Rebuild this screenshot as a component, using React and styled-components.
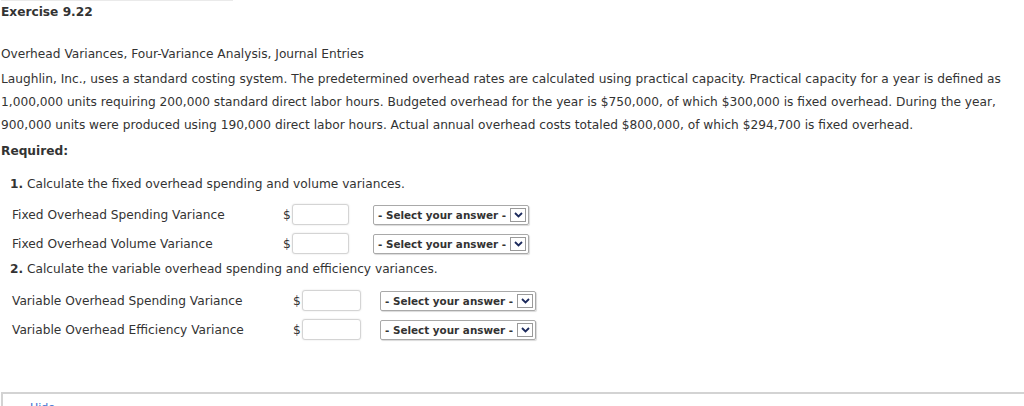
import React from "react";
import styled, { createGlobalStyle } from "styled-components";

const GlobalStyle = createGlobalStyle`
  body {
    margin: 0;
    background: #fff;
    font-family: "DejaVu Sans", Verdana, sans-serif;
    font-size: 12.2px;
    color: #333;
  }
`;

const Page = styled.div`
  width: 1024px;
  height: 406px;
  overflow: hidden;
  padding-left: 1px;
  box-sizing: border-box;
`;

const Header = styled.div`
  width: 232px;
  border-top: 1px solid #eaeaea;
  padding-top: 3px;
`;

const Title = styled.div`
  font-weight: bold;
  line-height: 16px;
`;

const Subtitle = styled.div`
  margin-top: 23px;
  margin-bottom: 2px;
  line-height: 23px;
`;

const Para = styled.p`
  margin: 0;
  line-height: 23px;
  white-space: nowrap;
`;

const Required = styled.div`
  margin-top: 3px;
  font-weight: bold;
  line-height: 23px;
`;

const Section = styled.div`
  padding-left: 9px;
  margin-top: ${(p) => p.$top}px;
`;

const Question = styled.div`
  line-height: 23px;
  b {
    font-weight: bold;
  }
`;

const Rows = styled.div`
  margin-top: ${(p) => p.$gap}px;
  padding-left: 2px;
`;

const Row = styled.div`
  display: grid;
  grid-template-columns: ${(p) => p.$label}px 9px ${(p) => p.$input}px ${(p) => p.$space}px auto;
  align-items: center;
  height: 29px;
`;

const Label = styled.span`
  white-space: nowrap;
`;

const Dollar = styled.span`
  text-align: left;
`;

const Amount = styled.input`
  width: 100%;
  height: 21px;
  box-sizing: border-box;
  border: 1px solid #d4d4d4;
  border-radius: 3px;
  box-shadow: 0 0 2px rgba(0, 0, 0, 0.12);
  padding: 0 3px;
  font: inherit;
`;

const Spacer = styled.span``;

const Select = styled.div`
  display: flex;
  align-items: center;
  justify-content: space-between;
  width: 156px;
  height: 20px;
  box-sizing: border-box;
  border: 1px solid #a9a9a9;
  border-radius: 2px;
  box-shadow: 1px 1px 1px rgba(0, 0, 0, 0.15);
  padding: 0 2px 0 4px;
  font-size: 10.4px;
  font-weight: bold;
  color: #333;
  white-space: nowrap;
`;

const Arrow = styled.span`
  display: flex;
  align-items: center;
  justify-content: center;
  width: 16px;
  height: 14px;
  box-sizing: border-box;
  border: 1px solid #9a9a9a;
  background: #fff;
`;

const HideBox = styled.div`
  margin-top: 48px;
  border-top: 2px solid #d3d3d3;
  border-left: 2px solid #d3d3d3;
  height: 30px;
  padding: 6px 0 0 27px;
  box-sizing: border-box;
`;

const HideLink = styled.a`
  color: #3a6fd0;
  font-size: 11px;
  text-decoration: none;
`;

const Chevron = () => (
  <svg width="9" height="6" viewBox="0 0 9 6">
    <path d="M1 1 L4.5 4.5 L8 1" fill="none" stroke="#1c2a5c" strokeWidth="1.8" />
  </svg>
);

const AnswerRow = ({ label, width, input, space }) => (
  <Row $label={width} $input={input} $space={space}>
    <Label>{label}</Label>
    <Dollar>$</Dollar>
    <Amount type="text" />
    <Spacer />
    <Select>
      - Select your answer -
      <Arrow>
        <Chevron />
      </Arrow>
    </Select>
  </Row>
);

export default function App() {
  return (
    <Page>
      <GlobalStyle />
      <Header>
        <Title>Exercise 9.22</Title>
      </Header>
      <Subtitle>Overhead Variances, Four-Variance Analysis, Journal Entries</Subtitle>
      <Para>
        Laughlin, Inc., uses a standard costing system. The predetermined overhead rates are calculated using practical
        capacity. Practical capacity for a year is defined as
        <br />
        1,000,000 units requiring 200,000 standard direct labor hours. Budgeted overhead for the year is $750,000, of
        which $300,000 is fixed overhead. During the year,
        <br />
        900,000 units were produced using 190,000 direct labor hours. Actual annual overhead costs totaled $800,000, of
        which $294,700 is fixed overhead.
      </Para>
      <Required>Required:</Required>
      <Section $top={10}>
        <Question>
          <b>1.</b> Calculate the fixed overhead spending and volume variances.
        </Question>
        <Rows $gap={4}>
          <AnswerRow label="Fixed Overhead Spending Variance" width={271} input={57} space={24} />
          <AnswerRow label="Fixed Overhead Volume Variance" width={271} input={57} space={24} />
        </Rows>
        <Question>
          <b>2.</b> Calculate the variable overhead spending and efficiency variances.
        </Question>
        <Rows $gap={5}>
          <AnswerRow label="Variable Overhead Spending Variance" width={281} input={59} space={19} />
          <AnswerRow label="Variable Overhead Efficiency Variance" width={281} input={59} space={19} />
        </Rows>
      </Section>
      <HideBox>
        <HideLink href="#">Hide</HideLink>
      </HideBox>
    </Page>
  );
}
